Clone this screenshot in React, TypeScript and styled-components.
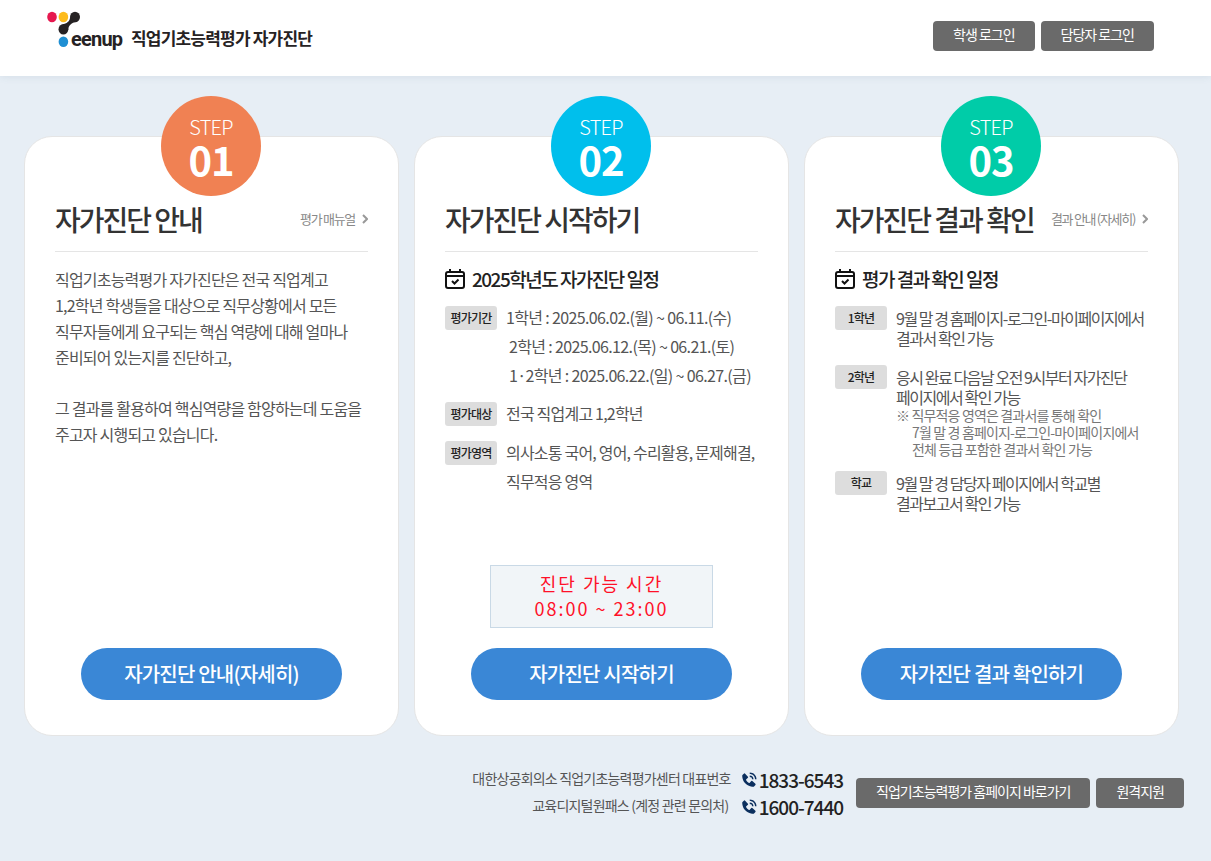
import React from 'react';
import styled, { createGlobalStyle } from 'styled-components';
import { BiSolidPhoneCall } from 'react-icons/bi';

const Global = createGlobalStyle`
  * { box-sizing: border-box; }
  body {
    margin: 0;
    background: #e7eef5;
    color: #555;
    font-family: "Noto Sans CJK KR", "Noto Sans", sans-serif;
    font-size: 16px;
    letter-spacing: -0.05em;
  }
  h1, h2, h3, p, ul, dl, dd, dt { margin: 0; padding: 0; font-weight: 400; }
  a { color: inherit; text-decoration: none; }
  button { font-family: inherit; letter-spacing: -0.04em; cursor: pointer; }
`;

const Header = styled.header`
  display: flex;
  justify-content: space-between;
  align-items: flex-start;
  height: 76px;
  padding: 10px 57px 0 46px;
  background: #fff;
  box-shadow: 0 0 8px rgba(80, 110, 140, 0.14);
`;

const Brand = styled.a`
  display: flex;
  align-items: flex-start;
  color: #262223;
`;

const BrandText = styled.span`
  padding: 14px 0 0 7px;
  font-size: 17px;
  line-height: 28px;
  font-weight: 700;
`;

const ButtonGroup = styled.div`
  display: flex;
  gap: 6px;
`;

const SmallButton = styled.button`
  height: 30px;
  padding: 0 20px 3px;
  border: 0;
  border-radius: 4px;
  background: #6a6a6a;
  color: #fff;
  font-size: 14px;
  line-height: 27px;
  letter-spacing: -1px;
  white-space: nowrap;
`;

const TopButtons = styled(ButtonGroup)`
  padding-top: 11px;
`;

const Cards = styled.main`
  display: grid;
  grid-template-columns: repeat(3, minmax(0, 1fr));
  gap: 15px;
  padding: 60px 32px 0 24px;
`;

const Card = styled.section`
  position: relative;
  display: flex;
  flex-direction: column;
  min-height: 600px;
  padding: 62px 30px 35px;
  border: 1px solid #e5e5e5;
  border-radius: 28px;
  background: #fff;
`;

const StepBadge = styled.div<{ $color: string }>`
  position: absolute;
  top: -41px;
  left: 50%;
  width: 100px;
  height: 100px;
  margin-left: -51px;
  padding: 19px 0 0 1px;
  border-radius: 50%;
  background: ${(p) => p.$color};
  color: #fff;
  text-align: center;
`;

const StepLabel = styled.span`
  display: block;
  font-size: 20px;
  line-height: 24px;
  font-weight: 300;
`;

const StepNumber = styled.strong`
  display: block;
  font-size: 40px;
  line-height: 40px;
  font-weight: 700;
  letter-spacing: -1px;
`;

const CardHead = styled.div`
  display: flex;
  justify-content: space-between;
  align-items: center;
  height: 53px;
  padding-bottom: 12px;
  border-bottom: 1px solid #e5e5e5;
`;

const Title = styled.h2`
  color: #333;
  font-size: 28px;
  line-height: 40px;
  font-weight: 500;
  letter-spacing: -2px;
  white-space: nowrap;
`;

const MoreLink = styled.a`
  display: flex;
  align-items: center;
  gap: 7px;
  color: #888;
  font-size: 13px;
  line-height: 20px;
  letter-spacing: -0.1em;
  white-space: nowrap;
`;

const Intro = styled.p`
  padding-top: 14px;
  line-height: 26px;

  & + & { padding-top: 25px; }
`;

const ScheduleTitle = styled.h3`
  display: flex;
  align-items: center;
  gap: 7px;
  height: 28px;
  margin: 13px 0 10px;
  color: #222;
  font-size: 19px;
  line-height: 28px;
  font-weight: 500;
  letter-spacing: -0.08em;
`;

const Row = styled.div<{ $gap: number }>`
  display: grid;
  grid-template-columns: 52px minmax(0, 1fr);
  column-gap: 9px;
  align-items: start;
  margin-bottom: ${(p) => p.$gap}px;
`;

const Tag = styled.dt`
  margin-top: 3px;
  border-radius: 3px;
  background: #ddd;
  color: #222;
  font-size: 12px;
  line-height: 24px;
  font-weight: 500;
  text-align: center;
`;

const Detail = styled.dd`
  line-height: 29px;
  white-space: nowrap;
`;

const PeriodDetail = styled(Detail)`
  letter-spacing: -0.04em;
`;

const CompactDetail = styled(Detail)`
  padding-top: 5px;
  line-height: 20px;
  letter-spacing: -0.09em;
`;

const Note = styled.p`
  padding-left: 16px;
  color: #777;
  font-size: 14px;
  line-height: 17px;
  letter-spacing: -0.06em;
  text-indent: -16px;
`;

const NoteLine = styled.span`
  display: block;
  text-indent: 0;
`;

const Bottom = styled.div`
  display: flex;
  flex-direction: column;
  align-items: center;
  gap: 20px;
  margin-top: auto;
`;

const TimeBox = styled.p`
  width: 223px;
  padding: 5px 0 6px;
  border: 1px solid #c9d9e6;
  background: #f1f5f8;
  color: #ff1028;
  font-size: 18px;
  line-height: 25px;
  letter-spacing: 2px;
  text-align: center;
`;

const MainButton = styled.button`
  width: 261px;
  height: 52px;
  padding: 0;
  border: 0;
  border-radius: 26px;
  background: #3a87d6;
  color: #fff;
  font-size: 20px;
  line-height: 52px;
  font-weight: 500;
`;

const Footer = styled.footer`
  display: flex;
  justify-content: flex-end;
  align-items: flex-start;
  gap: 13px;
  padding: 30px 27px 40px;
`;

const Contacts = styled.dl`
  display: grid;
  grid-template-columns: auto auto;
  column-gap: 9px;
  justify-items: end;
`;

const ContactName = styled.dt`
  font-size: 14px;
  line-height: 24px;
`;

const Phone = styled.dd`
  display: flex;
  align-items: center;
  gap: 1px;
  color: #222;
  font-size: 19px;
  line-height: 27px;
  font-weight: 500;
  letter-spacing: -1px;
`;

const FooterButtons = styled(ButtonGroup)`
  padding-top: 12px;
`;

const Logo = () => (
  <svg width="78" height="42" viewBox="0 0 78 42" role="img" aria-label="Teenup">
    <ellipse cx="6" cy="7" rx="4.800" ry="5.200" fill="#e6184f" />
    <ellipse cx="17.400" cy="7" rx="4.800" ry="5.200" fill="#fdbb1c" />
    <g fill="#262223">
      <ellipse cx="29" cy="7" rx="5" ry="5.200" />
      <ellipse cx="17.400" cy="19.200" rx="4.900" ry="5.200" />
      <path d="M24.100 7C24 11.500 20.500 13.800 16.500 14.100L22.300 19.800C22.300 15.500 26 12.300 30 12z" />
    </g>
    <ellipse cx="17.400" cy="31.800" rx="4.800" ry="5.200" fill="#1f8fd3" />
    <text x="25" y="36" fontFamily="Roboto, sans-serif" fontSize="20" fontWeight="700" fill="#262223">eenup</text>
  </svg>
);

const Chevron = () => (
  <svg width="6" height="10" viewBox="0 0 6 10" fill="none" stroke="#999" strokeWidth="2" aria-hidden="true">
    <path d="M1 1l4 4-4 4" />
  </svg>
);

const CalendarIcon = () => (
  <svg width="20" height="20" viewBox="0 0 20 20" fill="none" stroke="#111" strokeWidth="2" aria-hidden="true">
    <rect x="1" y="3" width="18" height="16" rx="2" />
    <path d="M1 7h18M5 0v3M15 0v3M7 12l2.500 2.500L13.500 10.500" />
  </svg>
);

const Step = ({ n, color }: { n: string; color: string }) => (
  <StepBadge $color={color}>
    <StepLabel>STEP</StepLabel>
    <StepNumber>{n}</StepNumber>
  </StepBadge>
);

const contacts = [
  ['대한상공회의소 직업기초능력평가센터 대표번호', '1833-6543'],
  ['교육디지털원패스 (계정 관련 문의처)\u00a0', '1600-7440'],
];

export default function App() {
  return (
    <>
      <Global />
      <Header>
        <Brand href="#">
          <Logo />
          <BrandText>직업기초능력평가 자가진단</BrandText>
        </Brand>
        <TopButtons>
          <SmallButton>학생 로그인</SmallButton>
          <SmallButton>담당자 로그인</SmallButton>
        </TopButtons>
      </Header>

      <Cards>
        <Card>
          <Step n="01" color="#f08153" />
          <CardHead>
            <Title>자가진단 안내</Title>
            <MoreLink href="#">평가 매뉴얼 <Chevron /></MoreLink>
          </CardHead>
          <Intro>
            직업기초능력평가 자가진단은 전국 직업계고<br />
            1,2학년 학생들을 대상으로 직무상황에서 모든<br />
            직무자들에게 요구되는 핵심 역량에 대해 얼마나<br />
            준비되어 있는지를 진단하고,
          </Intro>
          <Intro>
            그 결과를 활용하여 핵심역량을 함양하는데 도움을<br />
            주고자 시행되고 있습니다.
          </Intro>
          <Bottom>
            <MainButton>자가진단 안내(자세히)</MainButton>
          </Bottom>
        </Card>

        <Card>
          <Step n="02" color="#00bfec" />
          <CardHead>
            <Title>자가진단 시작하기</Title>
          </CardHead>
          <ScheduleTitle><CalendarIcon />2025학년도 자가진단 일정</ScheduleTitle>
          <dl>
            <Row $gap={9}>
              <Tag>평가기간</Tag>
              <PeriodDetail>
                1학년 : 2025.06.02.(월) ~ 06.11.(수)<br />
                &nbsp;2학년 : 2025.06.12.(목) ~ 06.21.(토)<br />
                &nbsp;1·2학년 : 2025.06.22.(일) ~ 06.27.(금)
              </PeriodDetail>
            </Row>
            <Row $gap={10}>
              <Tag>평가대상</Tag>
              <Detail>전국 직업계고 1,2학년</Detail>
            </Row>
            <Row $gap={10}>
              <Tag>평가영역</Tag>
              <Detail>의사소통 국어, 영어, 수리활용, 문제해결,<br />직무적응 영역</Detail>
            </Row>
          </dl>
          <Bottom>
            <TimeBox>진단 가능 시간<br />08:00 ~ 23:00</TimeBox>
            <MainButton>자가진단 시작하기</MainButton>
          </Bottom>
        </Card>

        <Card>
          <Step n="03" color="#00cca8" />
          <CardHead>
            <Title>자가진단 결과 확인</Title>
            <MoreLink href="#">결과 안내 (자세히) <Chevron /></MoreLink>
          </CardHead>
          <ScheduleTitle><CalendarIcon />평가 결과 확인 일정</ScheduleTitle>
          <dl>
            <Row $gap={14}>
              <Tag>1학년</Tag>
              <CompactDetail>9월 말 경 홈페이지-로그인-마이페이지에서<br />결과서 확인 가능</CompactDetail>
            </Row>
            <Row $gap={10}>
              <Tag>2학년</Tag>
              <CompactDetail>
                응시 완료 다음날 오전 9시부터 자가진단<br />페이지에서 확인 가능
                <Note>
                  ※ 직무적응 영역은 결과서를 통해 확인
                  <NoteLine>7월 말 경 홈페이지-로그인-마이페이지에서</NoteLine>
                  <NoteLine>전체 등급 포함한 결과서 확인 가능</NoteLine>
                </Note>
              </CompactDetail>
            </Row>
            <Row $gap={0}>
              <Tag>학교</Tag>
              <CompactDetail>9월 말 경 담당자 페이지에서 학교별<br />결과보고서 확인 가능</CompactDetail>
            </Row>
          </dl>
          <Bottom>
            <MainButton>자가진단 결과 확인하기</MainButton>
          </Bottom>
        </Card>
      </Cards>

      <Footer>
        <Contacts>
          {contacts.map(([name, tel]) => (
            <React.Fragment key={tel}>
              <ContactName>{name}</ContactName>
              <Phone><BiSolidPhoneCall size={18} color="#0b2f5e" />{tel}</Phone>
            </React.Fragment>
          ))}
        </Contacts>
        <FooterButtons>
          <SmallButton>직업기초능력평가 홈페이지 바로가기</SmallButton>
          <SmallButton>원격지원</SmallButton>
        </FooterButtons>
      </Footer>
    </>
  );
}
